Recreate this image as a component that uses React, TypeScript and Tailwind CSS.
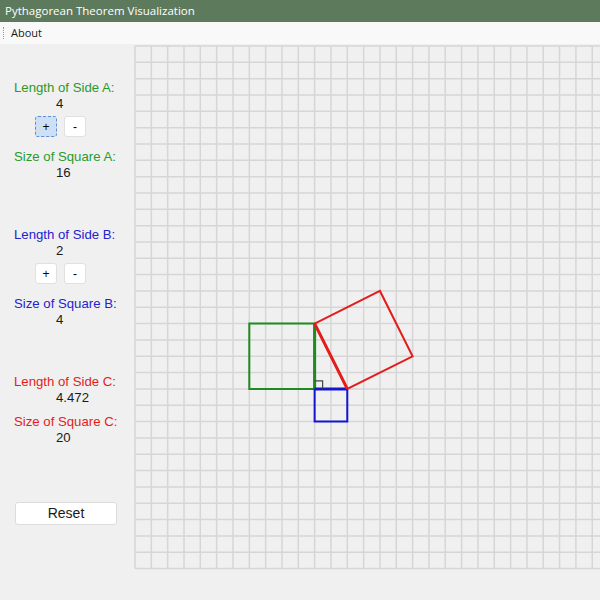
import React from 'react';

const S = 16.33;
const COLS = 29;
const ROWS = 32;

// side panel block for one side of the triangle
const SideBlock = ({
  side,
  length,
  area,
  color,
  buttons,
}: {
  side: string;
  length: string;
  area: string;
  color: string;
  buttons?: boolean;
}) => (
  <div className="flex flex-col">
    <div className={`pl-[14px] leading-[16px] ${color}`}>Length of Side {side}:</div>
    <div className="pl-[56px] leading-[16px] text-[#1a1a1a]">{length}</div>
    {buttons ? (
      <div className="flex gap-[7px] pl-[35px] mt-[4px] mb-[12px]">
        <button
          className={`w-[22px] h-[21px] rounded-[3px] text-[12px] leading-none flex items-center justify-center ${
            side === 'A'
              ? 'bg-[#cfe0f5] border border-[#5b8ed8] border-dashed'
              : 'bg-white border border-[#e0e0e0]'
          }`}
        >
          +
        </button>
        <button className="w-[22px] h-[21px] rounded-[3px] bg-white border border-[#e0e0e0] text-[12px] leading-none flex items-center justify-center">
          -
        </button>
      </div>
    ) : (
      <div className="h-[8px]" />
    )}
    <div className={`pl-[14px] leading-[16px] ${color}`}>Size of Square {side}:</div>
    <div className="pl-[56px] leading-[16px] text-[#1a1a1a]">{area}</div>
  </div>
);

export default function App() {
  const vLines = Array.from({ length: COLS }, (_, i) => i * S + 1);
  const hLines = Array.from({ length: ROWS + 1 }, (_, i) => i * S + 1);
  const p = (x: number, y: number) => `${x * S + 1},${y * S + 1}`;

  return (
    <div className="w-[600px] h-[600px] bg-[#f0f0f0] flex flex-col overflow-hidden font-['Liberation_Sans',Arial,sans-serif]">
      {/* title bar */}
      <div className="h-[22px] bg-[#5d7a5d] flex items-center px-[5px] text-white text-[11.5px] font-['Open_Sans',sans-serif]">
        Pythagorean Theorem Visualization
      </div>
      {/* menu */}
      <div className="h-[22px] bg-[#f9f9f9] flex items-center text-[11px] text-[#1a1a1a] font-['Open_Sans',sans-serif]">
        <div className="w-[1px] h-[12px] ml-[3px] border-l border-dotted border-[#999]" />
        <span className="ml-[7px] font-medium">About</span>
      </div>

      <div className="flex flex-1">
        {/* controls */}
        <div className="w-[134px] shrink-0 flex flex-col text-[13.2px] pt-[36px]">
          <SideBlock side="A" length="4" area="16" color="text-[#2a9a2a]" buttons />
          <div className="h-[46px]" />
          <SideBlock side="B" length="2" area="4" color="text-[#2323d0]" buttons />
          <div className="h-[46px]" />
          <SideBlock side="C" length="4.472" area="20" color="text-[#e41c1c]" />
          <button className="ml-[15px] mt-[56px] w-[102px] h-[23px] bg-white border border-[#dcdcdc] rounded-[3px] text-[14px] text-[#1a1a1a]">
            Reset
          </button>
        </div>

        {/* drawing canvas */}
        <div className="pt-[1px]">
          <svg width={466} height={ROWS * S + 2}>
            {vLines.map((x) => (
              <line key={`v${x}`} x1={x} y1={1} x2={x} y2={ROWS * S + 1} stroke="#d6d6d6" strokeWidth={1.5} />
            ))}
            {hLines.map((y) => (
              <line key={`h${y}`} x1={1} y1={y} x2={466} y2={y} stroke="#d6d6d6" strokeWidth={1.5} />
            ))}
            {/* square on A */}
            <polygon points={`${p(7, 17)} ${p(11, 17)} ${p(11, 21)} ${p(7, 21)}`} fill="none" stroke="#1f8a1f" strokeWidth={2} />
            {/* square on B */}
            <polygon points={`${p(11, 21)} ${p(13, 21)} ${p(13, 23)} ${p(11, 23)}`} fill="none" stroke="#1515d0" strokeWidth={2} />
            {/* square on C */}
            <polygon points={`${p(11, 17)} ${p(13, 21)} ${p(17, 19)} ${p(15, 15)}`} fill="none" stroke="#e41c1c" strokeWidth={2} />
            {/* triangle sides */}
            <line x1={11 * S + 1} y1={17 * S + 1} x2={11 * S + 1} y2={21 * S + 1} stroke="#1f8a1f" strokeWidth={3} />
            <line x1={11 * S + 1} y1={21 * S + 1} x2={13 * S + 1} y2={21 * S + 1} stroke="#1515d0" strokeWidth={3} />
            <line x1={11 * S + 1} y1={17 * S + 1} x2={13 * S + 1} y2={21 * S + 1} stroke="#e41c1c" strokeWidth={3} />
            {/* right angle mark */}
            <polyline
              points={`${11 * S + 1},${21 * S - 7} ${11 * S + 9},${21 * S - 7} ${11 * S + 9},${21 * S + 1}`}
              fill="none"
              stroke="#444"
              strokeWidth={1.2}
            />
          </svg>
        </div>
      </div>
    </div>
  );
}
